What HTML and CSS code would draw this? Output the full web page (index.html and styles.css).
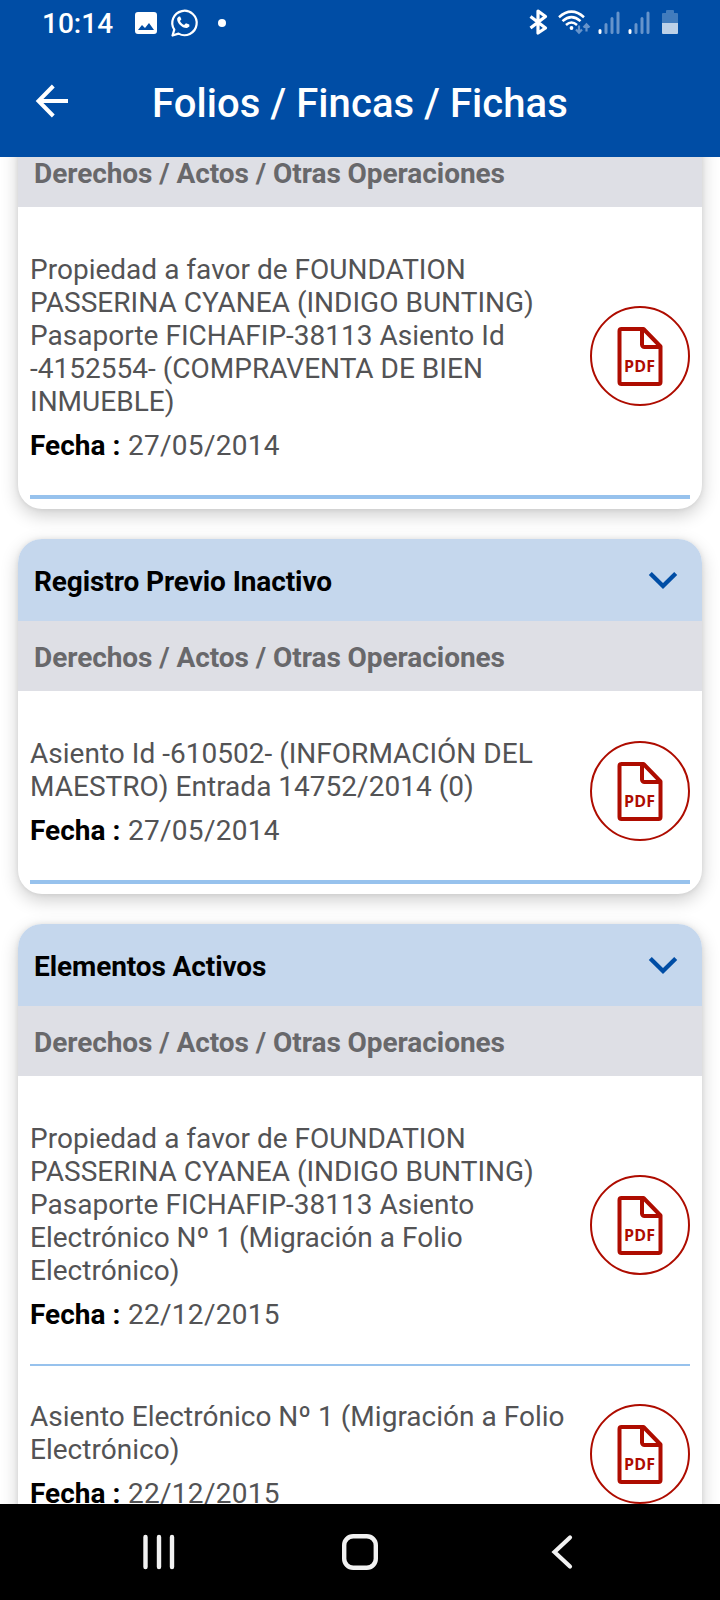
FILE: index.html
```html
<!DOCTYPE html>
<html lang="es">
<head>
<meta charset="utf-8">
<title>Folios / Fincas / Fichas</title>
<link rel="stylesheet" href="styles.css">
</head>
<body>
<svg class="defs" width="0" height="0">
  <symbol id="pdf" viewBox="0 0 100 100">
    <circle cx="50" cy="50" r="49" fill="none" stroke="#ae0c00" stroke-width="2"/>
    <path d="M52.500 23H31.500a2 2 0 0 0-2 2V76a2 2 0 0 0 2 2H68.500a2 2 0 0 0 2-2V40.500L53.500 23zM52 23V38.500a2.500 2.500 0 0 0 2.500 2.500H70" fill="none" stroke="#ae0c00" stroke-width="4" stroke-linejoin="round"/>
    <text x="34" y="65.600" class="pdf-label" textLength="31" lengthAdjust="spacing">PDF</text>
  </symbol>
  <symbol id="chevron" viewBox="0 0 30 20">
    <path d="M2.300 2.500L15 15L27.700 2.500" fill="none" stroke="#004da5" stroke-width="4.300"/>
  </symbol>
</svg>
<div class="screen">
  <header class="top">
    <div class="status">
      <span class="time">10:14</span>
      <svg class="left-icons" width="100" height="34" viewBox="130 6 100 34">
        <path fill="#fff" fill-rule="evenodd" d="M138 12h16a3 3 0 0 1 3 3v16a3 3 0 0 1-3 3h-16a3 3 0 0 1-3-3v-16a3 3 0 0 1 3-3zM138 30h16l-5-7-4 5-3-3z"/>
        <path d="M172.500 35.500L174.300 29.700A12.200 12.200 0 1 1 178.500 33.600Z" fill="none" stroke="#fff" stroke-width="2.200" stroke-linejoin="round"/>
        <path d="M178.800 16.500l-1.600 1.800c-.8 4.500 5 10.200 9.800 9.800l2.400-1.700-.1-1.800-3.300-1.400-1.900 1.700c-2-.9-3.300-2.300-4.100-3.900l1.400-1.800-1.300-2.700z" fill="#fff"/>
        <circle cx="222" cy="23" r="4" fill="#fff"/>
      </svg>
      <svg class="right-icons" width="154" height="34" viewBox="526 6 154 34">
        <path d="M530.500 16.500L545.500 28L538 33V11L545.500 16.500L530.500 28" fill="none" stroke="#fff" stroke-width="3.200" stroke-linejoin="round"/>
        <g fill="none" stroke="#fff" stroke-width="2.500">
          <path d="M559 17.200Q571.500 6 584 17.200M562.500 21.200Q571.500 13 580.500 21.200M566 25Q571.500 20 577 25"/>
        </g>
        <circle cx="571.500" cy="28" r="1.900" fill="#fff"/>
        <path d="M579 25.500v7M576 29.500l3 3.200 3-3.200M586.500 31.500v-7M583.500 27.500l3-3.200 3 3.200" fill="none" stroke="#6694cb" stroke-width="2.200"/>
        <g stroke="#6694cb" stroke-width="3" stroke-linecap="round">
          <path d="M606 24.500V32.500M612 18.500V32.500M618 13V32.500M636 24.500V32.500M642 18.500V32.500M648 13V32.500"/>
          <path stroke="#fff" d="M600 30.500V32.500M630 30.500V32.500"/>
        </g>
        <path d="M662 23V14a1 1 0 0 1 1-1h3v-2a1 1 0 0 1 1-1h6a1 1 0 0 1 1 1v2h3a1 1 0 0 1 1 1V23z" fill="#427cbd"/>
        <path d="M662 23h16v10a1 1 0 0 1-1 1h-14a1 1 0 0 1-1-1z" fill="#bdd1e8"/>
      </svg>
    </div>
    <div class="bar">
      <svg class="back" width="34" height="34" viewBox="0 0 34 34"><path d="M18.300 2L3.500 17L18.300 32M4 17H33" fill="none" stroke="#fff" stroke-width="4"/></svg>
      <h1>Folios / Fincas / Fichas</h1>
    </div>
  </header>

  <main class="list">
    <section class="card scrolled">
      <h3>Derechos / Actos / Otras Operaciones</h3>
      <div class="items">
        <article class="item last">
          <div class="info">
            <p>Propiedad a favor de FOUNDATION<br>PASSERINA CYANEA (INDIGO BUNTING)<br>Pasaporte FICHAFIP-38113 Asiento Id<br>-4152554- (COMPRAVENTA DE BIEN<br>INMUEBLE)</p>
            <p class="date"><b>Fecha :</b> <span>27/05/2014</span></p>
          </div>
          <svg class="pdf"><use href="#pdf"/></svg>
        </article>
      </div>
    </section>

    <section class="card">
      <h2>Registro Previo Inactivo <svg class="chevron"><use href="#chevron"/></svg></h2>
      <h3>Derechos / Actos / Otras Operaciones</h3>
      <div class="items">
        <article class="item last">
          <div class="info">
            <p>Asiento Id -610502- (INFORMACIÓN DEL<br>MAESTRO) Entrada 14752/2014 (0)</p>
            <p class="date"><b>Fecha :</b> <span>27/05/2014</span></p>
          </div>
          <svg class="pdf"><use href="#pdf"/></svg>
        </article>
      </div>
    </section>

    <section class="card">
      <h2>Elementos Activos <svg class="chevron"><use href="#chevron"/></svg></h2>
      <h3>Derechos / Actos / Otras Operaciones</h3>
      <div class="items">
        <article class="item">
          <div class="info">
            <p>Propiedad a favor de FOUNDATION<br>PASSERINA CYANEA (INDIGO BUNTING)<br>Pasaporte FICHAFIP-38113 Asiento<br>Electrónico Nº 1 (Migración a Folio<br>Electrónico)</p>
            <p class="date"><b>Fecha :</b> <span>22/12/2015</span></p>
          </div>
          <svg class="pdf"><use href="#pdf"/></svg>
        </article>
        <article class="item">
          <div class="info">
            <p>Asiento Electrónico Nº 1 (Migración a Folio<br>Electrónico)</p>
            <p class="date"><b>Fecha :</b> <span>22/12/2015</span></p>
          </div>
          <svg class="pdf"><use href="#pdf"/></svg>
        </article>
      </div>
    </section>
  </main>

  <nav class="nav">
    <svg width="40" height="40" viewBox="0 0 40 40"><path d="M6.500 5V35M20 5V35M33 5V35" stroke="#f2f2f2" stroke-width="4.400" stroke-linecap="round"/></svg>
    <svg width="40" height="40" viewBox="0 0 40 40"><rect x="4.200" y="4.200" width="31.600" height="31.600" rx="9" fill="none" stroke="#f2f2f2" stroke-width="4.400"/></svg>
    <svg width="40" height="40" viewBox="0 0 40 40"><path d="M29 5.500L13.500 20L29 34.500" fill="none" stroke="#f2f2f2" stroke-width="4.200" stroke-linecap="round"/></svg>
  </nav>
</div>
</body>
</html>
```
FILE: styles.css
```css
* { box-sizing: border-box; }
body { margin: 0; font-family: Roboto, sans-serif; font-size: 28px; line-height: 33px; color: #535355; }
h1, h2, h3, p { margin: 0; }
svg { display: block; flex: none; }
.defs { position: absolute; }
.screen { width: 720px; height: 1600px; display: flex; flex-direction: column; overflow: hidden; background: #fff; }

.top { height: 157px; flex: none; background: #004da5; color: #fff; }
.status { height: 46px; padding: 6px 40px 0 42px; display: flex; align-items: flex-start; }
.time { width: 88px; padding-top: 1px; font-weight: 500; white-space: nowrap; }
.right-icons { margin-left: auto; }
.bar { height: 111px; padding-left: 35px; display: flex; align-items: flex-start; }
.back { margin-top: 38px; }
h1 { margin: 34px 0 0 83px; font-size: 40px; line-height: 47px; font-weight: 500; letter-spacing: .08px; white-space: nowrap; }

.list { flex: 1; min-height: 0; overflow: hidden; padding: 0 18px; display: flex; flex-direction: column; gap: 30px; }
.card { flex: none; background: #fff; border-radius: 24px; box-shadow: 0 6px 18px rgba(0, 0, 0, .2), 0 0 5px rgba(0, 0, 0, .08); }
.card.scrolled { margin-top: -20px; border-radius: 0 0 24px 24px; }
h2 { height: 82px; padding: 2px 24px 0 16px; border-radius: 24px 24px 0 0; background: #c5d7ed; color: #000; font-size: 28px; font-weight: 700; letter-spacing: -.1px; display: flex; align-items: center; justify-content: space-between; }
.chevron { width: 30px; height: 20px; margin-top: -1px; }
h3 { height: 70px; padding: 20px 16px 0; background: #dedfe5; color: #68686b; font-size: 28px; font-weight: 700; letter-spacing: -.06px; white-space: nowrap; }
.items { padding: 12px 12px 10px; }
.item { padding: 34px 0 33px; border-bottom: 2px solid #97c2ed; display: flex; align-items: center; justify-content: space-between; }
.item.last { border-bottom-width: 4px; }
.info { white-space: nowrap; letter-spacing: .015px; }
.date { margin-top: 11px; }
.date b { color: #000; font-weight: 700; }
.date span { margin-left: .6px; letter-spacing: .28px; }
.pdf { width: 100px; height: 100px; margin-top: -3px; }
.pdf-label { font: 700 16px "Open Sans", "Noto Sans", sans-serif; fill: #ae0c00; }

.nav { height: 96px; flex: none; padding: 0 139px; background: #000; display: flex; align-items: center; justify-content: space-between; }
```
